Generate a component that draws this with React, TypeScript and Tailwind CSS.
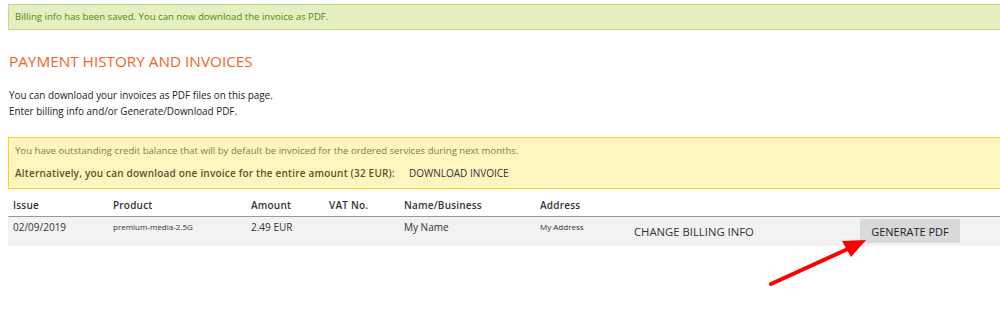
export default function App() {
  const cols =
    "grid grid-cols-[100px_138px_78px_75px_136px_94px_226px_1fr] pl-[5px]";
  return (
    <div
      className="relative w-[1000px] h-[333px] overflow-hidden bg-white pl-2 pt-[4px] text-[#333]"
      style={{ fontFamily: '"Open Sans", "Liberation Sans", sans-serif' }}
    >
      <div className="h-[26px] bg-[#e6efc2] border border-[#c6d880] border-r-0 flex items-center pl-[6px] text-[9.6px] text-[#4f8a10]">
        Billing info has been saved. You can now download the invoice as PDF.
      </div>

      <h1 className="mt-[18px] pl-px text-[15.3px] leading-[26px] text-[#f26522]">
        PAYMENT HISTORY AND INVOICES
      </h1>

      <div className="mt-[13px] pl-px text-[9.9px] leading-[16px] text-[#222]">
        <p>You can download your invoices as PDF files on this page.</p>
        <p>Enter billing info and/or Generate/Download PDF.</p>
      </div>

      <div className="mt-[18px] h-[52px] bg-[#fff6bf] border border-[#ffd324] border-r-0 pl-[6px] pt-[5px]">
        <p className="text-[9.6px] leading-[16px] text-[#8a7a3a]">
          You have outstanding credit balance that will by default be invoiced
          for the ordered services during next months.
        </p>
        <div className="mt-[6px] flex items-center text-[10px] leading-[16px]">
          <span className="font-semibold tracking-[0.2px] text-[#5e5228]">
            Alternatively, you can download one invoice for the entire amount
            (32 EUR):
          </span>
          <span className="ml-[14px] text-[#333]">DOWNLOAD INVOICE</span>
        </div>
      </div>

      <div className="mt-[6px]">
        <div
          className={`${cols} h-[22px] items-center text-[10px] font-semibold tracking-[0.2px] text-[#333] border-b border-[#999]`}
        >
          <span>Issue</span>
          <span>Product</span>
          <span>Amount</span>
          <span>VAT No.</span>
          <span>Name/Business</span>
          <span>Address</span>
          <span />
          <span />
        </div>
        <div
          className={`${cols} h-[29px] bg-[#f2f2f2] text-[10px] leading-[15px] text-[#333]`}
        >
          <span className="pt-[3px]">02/09/2019</span>
          <span className="pt-[2px] text-[8px]">premium-media-2.5G</span>
          <span className="pt-[3px]">2.49 EUR</span>
          <span />
          <span className="pt-[3px]">My Name</span>
          <span className="pt-[2px] text-[8px]">My Address</span>
          <span className="pt-[7px] text-[11.3px]">CHANGE BILLING INFO</span>
          <div className="pt-[2px]">
            <button className="w-[100px] h-[24px] bg-[#d9d9d9] rounded-[2px] text-[11px] text-[#222]">
              GENERATE PDF
            </button>
          </div>
        </div>
      </div>

      <svg
        className="absolute left-0 top-0 pointer-events-none"
        width="1000"
        height="333"
      >
        <line
          x1="771"
          y1="284"
          x2="850"
          y2="248"
          stroke="#ff0000"
          strokeWidth="4"
          strokeLinecap="round"
        />
        <polygon points="866,240 842,241 851,257" fill="#ff0000" />
      </svg>
    </div>
  );
}
